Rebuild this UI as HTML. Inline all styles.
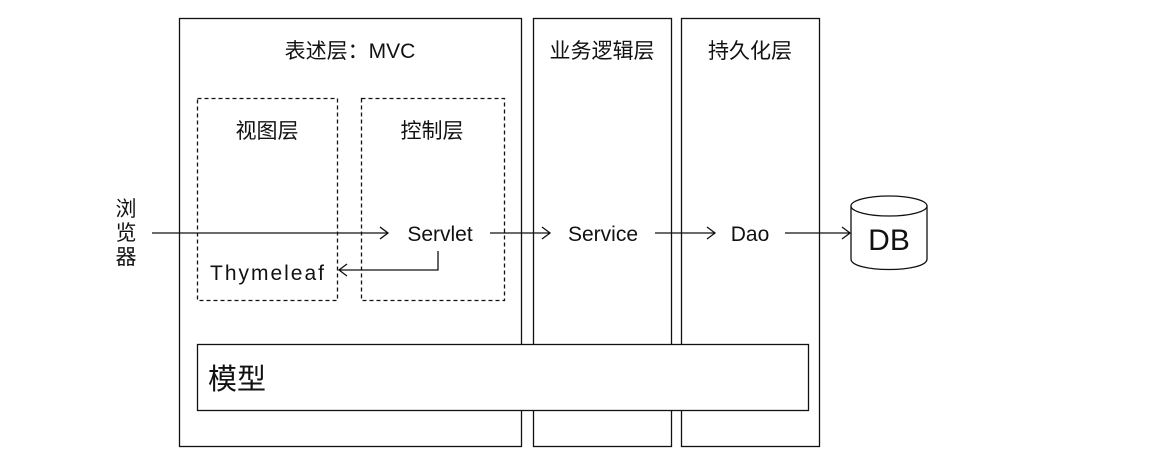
<!DOCTYPE html><html><head><style>body{margin:0;background:#fff}svg{display:block}text{font-family:"Liberation Sans","Noto Sans CJK SC",sans-serif;fill:#111}</style></head><body>
<svg width="1156" height="465" viewBox="0 0 1156 465" xmlns="http://www.w3.org/2000/svg">
<g fill="none" stroke="#111" stroke-width="1.3">
<rect x="179.5" y="18.5" width="342" height="428"/>
<rect x="533.5" y="18.5" width="138" height="428"/>
<rect x="681.5" y="18.5" width="138" height="428"/>
<rect x="197.5" y="98.5" width="140" height="202" stroke-dasharray="4,3"/>
<rect x="361.5" y="98.5" width="143" height="202" stroke-dasharray="4,3"/>
<rect x="197.5" y="344.5" width="611" height="66" fill="#fff"/>
<path d="M152 233H388M380 227l8 6-8 6"/>
<path d="M490 233H550M542 227l8 6-8 6"/>
<path d="M655 233H715M707 227l8 6-8 6"/>
<path d="M785 233H850M842 227l8 6-8 6"/>
<path d="M438 251V270H339M347 264l-8 6 8 6"/>
<path d="M851 206V259C851 273 927 273 927 259V206" fill="#fff"/>
<ellipse cx="889" cy="206" rx="38" ry="10" fill="#fff"/>
</g>
<g font-size="21">
<text x="350" y="58" text-anchor="middle">表述层：MVC</text>
<text x="602" y="58" text-anchor="middle">业务逻辑层</text>
<text x="750" y="58" text-anchor="middle">持久化层</text>
<text x="267" y="138" text-anchor="middle">视图层</text>
<text x="432" y="138" text-anchor="middle">控制层</text>
<text x="440" y="241" text-anchor="middle">Servlet</text>
<text x="603" y="241" text-anchor="middle">Service</text>
<text x="750" y="241" text-anchor="middle">Dao</text>
<text x="267" y="280" text-anchor="middle" textLength="114">Thymeleaf</text>
<text x="126" y="216" text-anchor="middle">浏</text>
<text x="126" y="240" text-anchor="middle">览</text>
<text x="126" y="264" text-anchor="middle">器</text>
</g>
<text x="208" y="389" font-size="29">模型</text>
<text x="889" y="250" font-size="30" text-anchor="middle">DB</text>
</svg></body></html>
